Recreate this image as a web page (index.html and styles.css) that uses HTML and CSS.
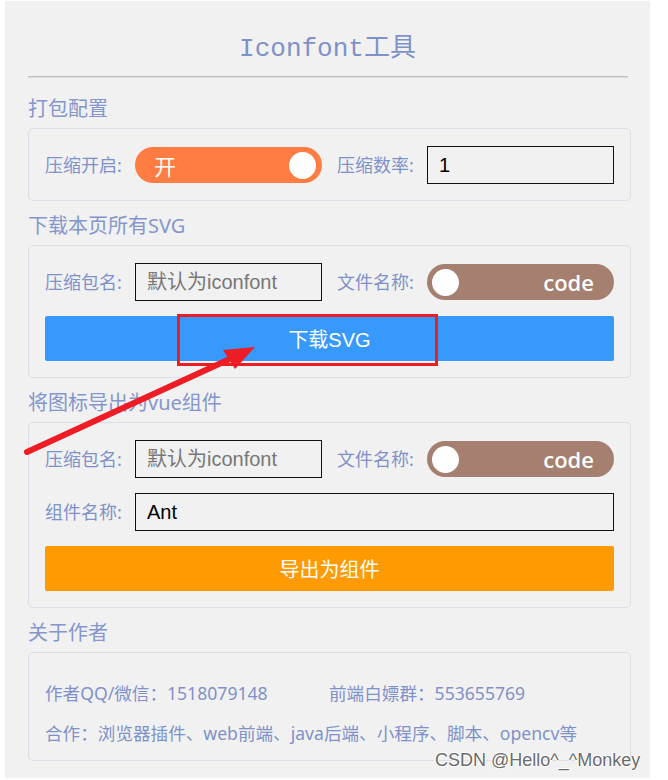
FILE: index.html
```html
<!DOCTYPE html>
<html lang="zh">
<head>
<meta charset="utf-8">
<title>Iconfont工具</title>
<link rel="stylesheet" href="styles.css">
</head>
<body>
<div class="panel">
  <h1 class="title">Iconfont工具</h1>
  <hr class="rule">

  <h2 class="sec-title first">打包配置</h2>
  <div class="card">
    <div class="row">
      <span class="label">压缩开启:</span>
      <div class="switch on"><span class="switch-text">开</span><span class="knob"></span></div>
      <span class="label">压缩数率:</span>
      <input class="field" type="text" value="1">
    </div>
  </div>

  <h2 class="sec-title">下载本页所有SVG</h2>
  <div class="card">
    <div class="row">
      <span class="label">压缩包名:</span>
      <input class="field fixed" type="text" placeholder="默认为iconfont">
      <span class="label">文件名称:</span>
      <div class="switch off"><span class="knob"></span><span class="switch-text">code</span></div>
    </div>
    <button class="btn blue">下载SVG</button>
  </div>

  <h2 class="sec-title">将图标导出为vue组件</h2>
  <div class="card">
    <div class="row">
      <span class="label">压缩包名:</span>
      <input class="field fixed" type="text" placeholder="默认为iconfont">
      <span class="label">文件名称:</span>
      <div class="switch off"><span class="knob"></span><span class="switch-text">code</span></div>
    </div>
    <div class="row">
      <span class="label">组件名称:</span>
      <input class="field" type="text" value="Ant">
    </div>
    <button class="btn orange">导出为组件</button>
  </div>

  <h2 class="sec-title">关于作者</h2>
  <div class="card about">
    <p class="line"><span class="qq">作者QQ/微信：1518079148</span><span>前端白嫖群：553655769</span></p>
    <p class="line">合作：浏览器插件、web前端、java后端、小程序、脚本、opencv等</p>
  </div>
</div>

<svg class="annot" width="668" height="780" viewBox="0 0 668 780">
  <rect x="178.5" y="315.5" width="258" height="49" fill="none" stroke="#ee1c25" stroke-width="3"/>
  <line x1="27" y1="452" x2="232" y2="358" stroke="#ee1c25" stroke-width="6" stroke-linecap="round"/>
  <polygon points="223,350 255,347 235,369" fill="#ee1c25"/>
</svg>

<div class="watermark">CSDN @Hello^_^Monkey</div>
</body>
</html>
```

FILE: styles.css
```css
html, body {
  margin: 0;
  padding: 0;
  background: #ffffff;
}

body {
  position: relative;
  width: 668px;
  height: 780px;
  overflow: hidden;
  font-family: "Noto Sans", "Noto Sans CJK SC", sans-serif;
  color: #7f91c9;
}

.panel {
  margin: 1px 0 0 5px;
  width: 645px;
  height: 777px;
  box-sizing: border-box;
  padding: 30px 19px 0 23px;
  background: #f1f1f1;
}

.title {
  margin: 0;
  font-family: "Liberation Mono", "Noto Sans CJK SC", monospace;
  font-weight: normal;
  font-size: 26px;
  line-height: 36px;
  text-align: center;
  color: #7f91c9;
  padding-right: 4px;
}

.rule {
  margin: 9px 3px 0 0;
  border: 0;
  border-top: 1px solid #bdbdbd;
  border-bottom: 1px solid #dedede;
  height: 0;
}

.sec-title {
  margin: 12px 0 6px;
  font-weight: normal;
  font-size: 20px;
  line-height: 26px;
  color: #8496cc;
}

.sec-title.first {
  margin-top: 18px;
}

.card {
  border: 1px solid #dcdde6;
  border-radius: 5px;
  padding: 17px 16px 16px;
  display: flex;
  flex-direction: column;
  gap: 15px;
}

.row {
  display: flex;
  align-items: center;
  height: 38px;
}

.label {
  width: 90px;
  flex: none;
  font-size: 18px;
  line-height: 38px;
  color: #7f91c9;
  white-space: nowrap;
}

.field {
  flex: 1;
  min-width: 0;
  height: 38px;
  box-sizing: border-box;
  border: 1px solid #111;
  background: transparent;
  padding: 0 11px;
  font-family: "Liberation Sans", "Noto Sans CJK SC", sans-serif;
  font-size: 20px;
  color: #000;
  outline: none;
}

.field::placeholder {
  color: #777;
}

.field.fixed {
  flex: none;
  width: 187px;
  margin-right: 15px;
}

.switch {
  position: relative;
  flex: none;
  height: 36px;
  border-radius: 18px;
  display: flex;
  align-items: center;
  box-sizing: border-box;
}

.switch.on {
  width: 187px;
  margin-right: 15px;
  background: #ff7d42;
  padding: 0 6px 0 19px;
  justify-content: space-between;
}

.switch.off {
  flex: 1;
  background: #a57f70;
  padding: 0 20px 0 5px;
  justify-content: space-between;
}

.switch-text {
  color: #fff;
  font-size: 22px;
  line-height: 36px;
}

.switch.on .switch-text {
  font-family: "Noto Sans CJK SC", sans-serif;
}

.switch.off .switch-text {
  font-family: "Open Sans", sans-serif;
  font-weight: 600;
}

.knob {
  width: 27px;
  height: 27px;
  border-radius: 50%;
  background: #fff;
}

.btn {
  height: 45px;
  border: 0;
  border-radius: 2px;
  color: #fff;
  font-family: "Liberation Sans", "Noto Sans CJK SC", sans-serif;
  font-size: 20px;
  padding: 0;
}

.btn.blue {
  background: #3899fd;
}

.btn.orange {
  background: #ff9b00;
}

.card.about {
  padding: 20px 16px 7px;
  gap: 0;
}

.line {
  margin: 0;
  font-size: 17.6px;
  line-height: 40px;
  color: #7f91c9;
  white-space: nowrap;
}

.qq {
  display: inline-block;
  width: 284px;
}

.annot {
  position: absolute;
  left: 0;
  top: 0;
  pointer-events: none;
}

.watermark {
  position: absolute;
  left: 435px;
  top: 748px;
  font-family: "Liberation Sans", sans-serif;
  font-size: 18px;
  line-height: 24px;
  color: #6b6b6b;
  text-shadow: 1px 0 0 #fff, -1px 0 0 #fff, 0 1px 0 #fff, 0 -1px 0 #fff;
  white-space: nowrap;
}
```
